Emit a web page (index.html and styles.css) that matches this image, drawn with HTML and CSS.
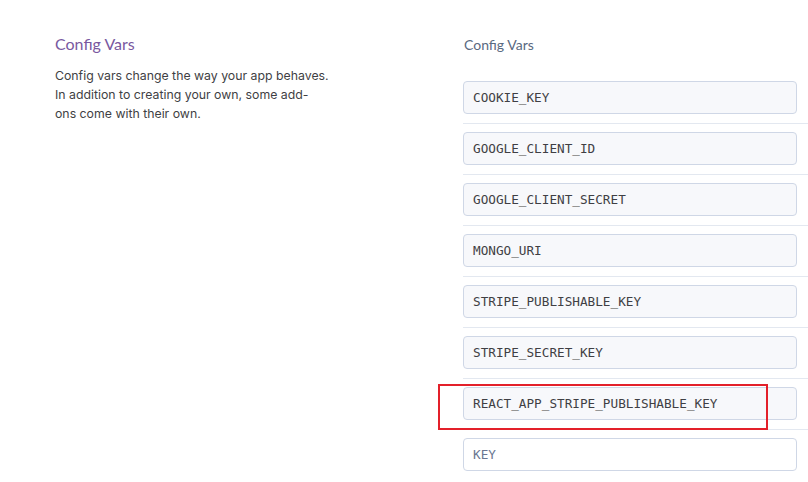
FILE: index.html
```html
<!DOCTYPE html>
<html>
<head>
<meta charset="utf-8">
<link rel="stylesheet" href="styles.css">
</head>
<body>
<div class="page">
  <section class="intro">
    <h2 class="intro-title">Config Vars</h2>
    <p class="intro-text">Config vars change the way your app behaves.<br>In addition to creating your own, some add-<br>ons come with their own.</p>
  </section>
  <section class="vars">
    <div class="vars-label">Config Vars</div>
    <ul class="var-list">
      <li class="var-row"><div class="var-input">COOKIE_KEY</div></li>
      <li class="var-row"><div class="var-input">GOOGLE_CLIENT_ID</div></li>
      <li class="var-row"><div class="var-input">GOOGLE_CLIENT_SECRET</div></li>
      <li class="var-row"><div class="var-input">MONGO_URI</div></li>
      <li class="var-row"><div class="var-input">STRIPE_PUBLISHABLE_KEY</div></li>
      <li class="var-row"><div class="var-input">STRIPE_SECRET_KEY</div></li>
      <li class="var-row highlight"><div class="var-input">REACT_APP_STRIPE_PUBLISHABLE_KEY</div><span class="mark"></span></li>
      <li class="var-row last"><div class="var-input placeholder">KEY</div></li>
    </ul>
  </section>
</div>
</body>
</html>
```
FILE: styles.css
```css
html, body {
  margin: 0;
  padding: 0;
  background: #ffffff;
  overflow: hidden;
}
.page {
  display: flex;
  width: 808px;
  height: 482px;
  box-sizing: border-box;
  padding: 0 0 0 55px;
  font-family: Lato, "Open Sans", sans-serif;
}
.intro {
  width: 290px;
  padding-top: 33px;
}
.intro-title {
  margin: 0;
  font-size: 16px;
  font-weight: 400;
  color: #79589f;
  line-height: 22px;
}
.intro-text {
  margin: 11px 0 0;
  font-family: Inter, sans-serif;
  font-size: 12.3px;
  line-height: 19px;
  color: #3f3f44;
}
.vars {
  flex: 1;
  margin-left: 118px;
  padding-top: 35px;
}
.vars-label {
  font-size: 14px;
  line-height: 20px;
  color: #596981;
  padding-left: 1px;
}
.var-list {
  list-style: none;
  margin: 26px 0 0;
  padding: 0;
}
.var-row {
  position: relative;
  padding: 0 11px 9px 0;
  border-bottom: 1px solid #e3e8f0;
  margin-bottom: 8px;
}
.var-row.last {
  border-bottom: none;
}
.var-input {
  box-sizing: border-box;
  height: 33px;
  border: 1px solid #cfd7e6;
  border-radius: 4px;
  background: #f7f8fb;
  padding: 0 9px;
  font-family: "DejaVu Sans Mono", monospace;
  font-size: 12.7px;
  line-height: 31px;
  color: #3f3f44;
}
.var-input.placeholder {
  background: #ffffff;
  color: #6a7791;
}
.mark {
  position: absolute;
  left: -25px;
  top: -3px;
  width: 326px;
  height: 42px;
  border: 2px solid #e3202a;
}
```
